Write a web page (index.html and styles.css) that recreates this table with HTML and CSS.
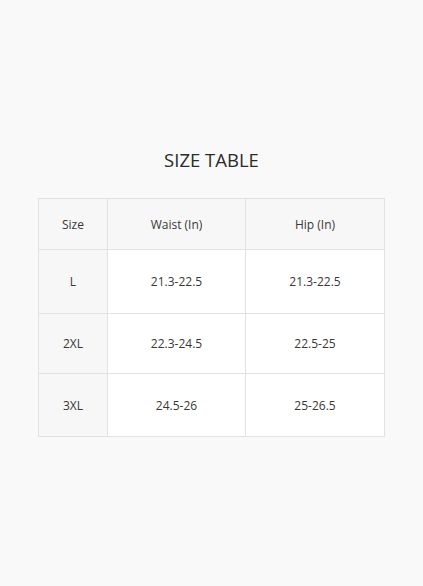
FILE: index.html
```html
<!DOCTYPE html>
<html>
<head>
<meta charset="utf-8">
<link rel="stylesheet" href="styles.css">
</head>
<body>
<main class="page">
  <h1 class="title">SIZE TABLE</h1>
  <table class="size-table">
    <colgroup>
      <col class="c1"><col class="c2"><col class="c3">
    </colgroup>
    <tr class="head"><td class="first">Size</td><td>Waist (In)</td><td>Hip (In)</td></tr>
    <tr class="r1"><td class="first">L</td><td>21.3-22.5</td><td>21.3-22.5</td></tr>
    <tr class="r2"><td class="first">2XL</td><td>22.3-24.5</td><td>22.5-25</td></tr>
    <tr class="r3"><td class="first">3XL</td><td>24.5-26</td><td>25-26.5</td></tr>
  </table>
</main>
</body>
</html>
```
FILE: styles.css
```css
html, body {
  margin: 0;
  padding: 0;
  background: #f9f9f9;
}
body {
  width: 423px;
  height: 586px;
  font-family: "Open Sans", "Liberation Sans", sans-serif;
  color: #333;
}
.page {
  padding-top: 148px;
  display: flex;
  flex-direction: column;
  align-items: center;
}
.title {
  margin: 0;
  font-size: 18.5px;
  font-weight: 400;
  line-height: 24px;
  color: #2b2b2b;
  letter-spacing: 0;
}
.size-table {
  margin-top: 26px;
  margin-left: 38px;
  align-self: flex-start;
  width: 347px;
  border-collapse: collapse;
  table-layout: fixed;
  font-size: 12px;
  color: #383838;
}
.c1 { width: 69px; }
.c2 { width: 138px; }
.c3 { width: 139px; }
.size-table td {
  border: 1px solid #e2e2e2;
  text-align: center;
  padding: 0;
  background: #fff;
}
.size-table td.first,
.size-table tr.head td {
  background: #f7f7f7;
}
.head td { height: 50px; }
.r1 td { height: 63px; }
.r2 td { height: 59px; }
.r3 td { height: 62px; }
```
